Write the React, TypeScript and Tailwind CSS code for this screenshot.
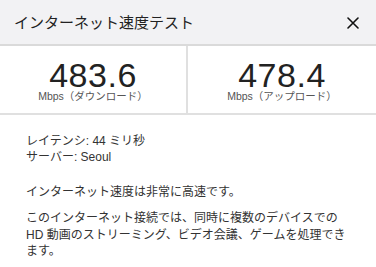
import React from "react";

const jp = { fontFamily: '"Liberation Sans", "Noto Sans CJK JP", sans-serif' };

export default function App() {
  return (
    <div className="w-[376px] h-[267px] overflow-hidden bg-white" style={jp}>
      <div className="h-[46px] flex items-center justify-between bg-[#f2f2f4] border-b-2 border-[#dadada] pl-[14px] pr-[17px]">
        <span className="text-[15px] text-[#222] leading-none">インターネット速度テスト</span>
        <svg width="12" height="12" viewBox="0 0 12 12" className="mt-[1px]">
          <path d="M1 1 L11 11 M11 1 L1 11" stroke="#111" strokeWidth="1.6" strokeLinecap="round" />
        </svg>
      </div>
      <div className="h-[69px] grid grid-cols-[188px_1fr] border-b-2 border-[#e0e0e0]">
        <div className="flex flex-col items-center pt-[14px] border-r-2 border-[#e0e0e0]">
          <div className="text-[34px] leading-[30px] tracking-[0.5px] text-[#222]">483.6</div>
          <div className="text-[10.5px] leading-none text-[#555] mt-[1px]">Mbps（ダウンロード）</div>
        </div>
        <div className="flex flex-col items-center pt-[14px]">
          <div className="text-[34px] leading-[30px] tracking-[0.5px] text-[#222]">478.4</div>
          <div className="text-[10.5px] leading-none text-[#555] mt-[1px]">Mbps（アップロード）</div>
        </div>
      </div>
      <div className="px-[26px] pt-[18px] text-[12px] leading-[16px] text-[#333]">
        <div>
          <div>レイテンシ: 44 ミリ秒</div>
          <div>サーバー: Seoul</div>
        </div>
        <div className="mt-[19px]">インターネット速度は非常に高速です。</div>
        <div className="mt-[10px] leading-[16.5px]">
          このインターネット接続では、同時に複数のデバイスでの
          <br />
          HD 動画のストリーミング、ビデオ会議、ゲームを処理でき
          <br />
          ます。
        </div>
      </div>
    </div>
  );
}
